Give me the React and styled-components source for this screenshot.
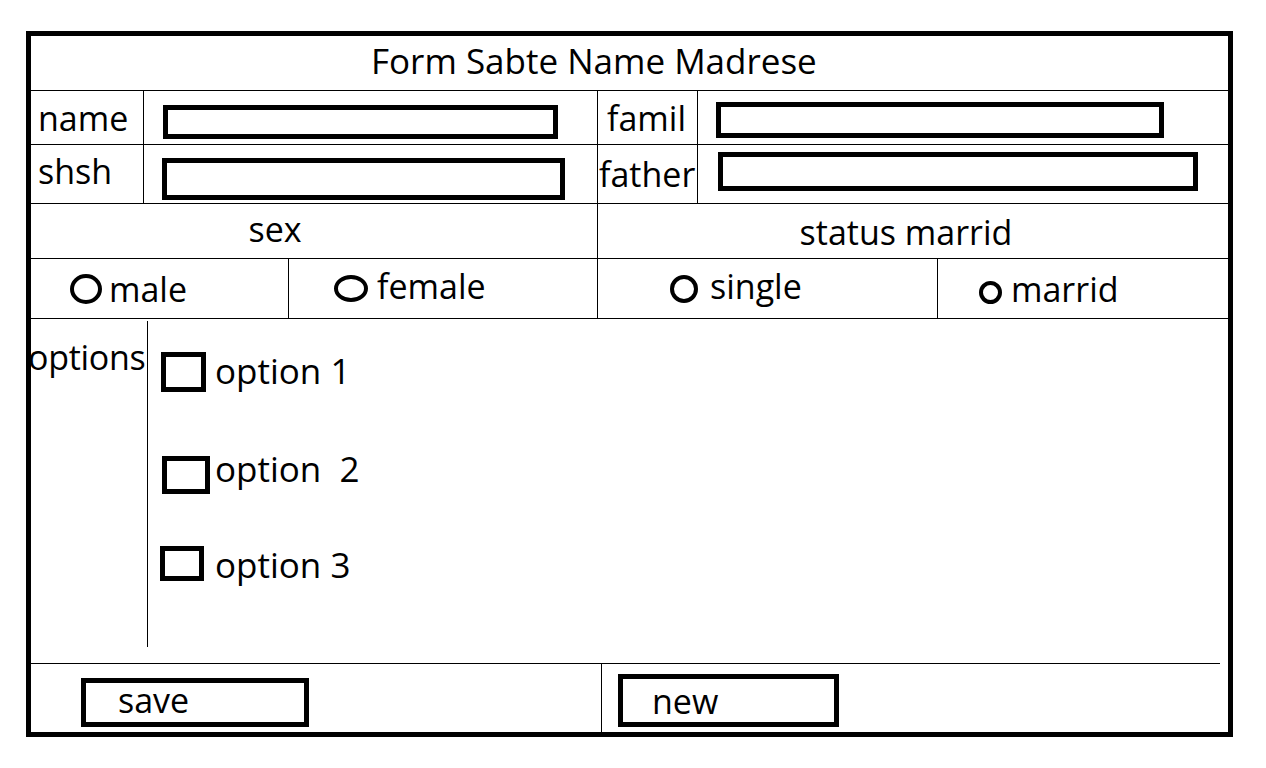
import React from "react";
import styled, { createGlobalStyle } from "styled-components";

const Global = createGlobalStyle`
  html, body { margin: 0; padding: 0; background: #fff; }
  body { font-family: "Open Sans", "Noto Sans", sans-serif; color: #000; }
  * { box-sizing: border-box; }
`;

const Frame = styled.div`
  width: 1207px;
  height: 706px;
  margin: 31px 0 0 26px;
  border: 5px solid #000;
  display: flex;
  flex-direction: column;
  font-size: 34px;
  line-height: 1;
`;

const TitleRow = styled.div`
  height: 55px;
  border-bottom: 1px solid #000;
  display: flex;
  align-items: center;
  padding: 0 0 6px 340px;
  font-size: 35px;
`;

const FieldGrid = styled.div`
  display: grid;
  grid-template-columns: 113px 454px 100px 1fr;
  grid-template-rows: 54px 59px;
`;

const LabelCell = styled.div`
  border-bottom: 1px solid #000;
  border-right: 1px solid #000;
  display: flex;
  align-items: center;
  padding-left: ${(p) => p.$pl}px;
  padding-bottom: ${(p) => p.$pb || 0}px;
  white-space: nowrap;
  overflow: visible;
`;

const InputCell = styled.div`
  border-bottom: 1px solid #000;
  border-right: ${(p) => (p.$last ? "none" : "1px solid #000")};
`;

const TextBox = styled.div`
  margin: ${(p) => p.$y}px 0 0 ${(p) => p.$x}px;
  width: ${(p) => p.$w}px;
  height: ${(p) => p.$h}px;
  border: 5px solid #000;
`;

const HeaderRow = styled.div`
  height: 55px;
  display: grid;
  grid-template-columns: 567px 1fr;
  border-bottom: 1px solid #000;
`;

const HeaderCell = styled.div`
  display: flex;
  align-items: center;
  justify-content: center;
  padding: ${(p) => p.$pt || 0}px ${(p) => p.$pr || 0}px ${(p) => p.$pb || 0}px 0;
  border-right: ${(p) => (p.$last ? "none" : "1px solid #000")};
`;

const RadioRow = styled.div`
  height: 60px;
  display: grid;
  grid-template-columns: 258px 309px 340px 1fr;
  border-bottom: 1px solid #000;
`;

const RadioCell = styled.label`
  display: flex;
  align-items: center;
  padding-left: ${(p) => p.$pl}px;
  gap: ${(p) => p.$gap}px;
  border-right: ${(p) => (p.$last ? "none" : "1px solid #000")};
`;

const Circle = styled.span`
  width: ${(p) => p.$size}px;
  height: ${(p) => p.$hsize || p.$size}px;
  border: 4px solid #000;
  border-radius: 50%;
  flex: none;
  margin-top: ${(p) => p.$mt || 0}px;
`;

const RadioText = styled.span`
  margin-top: ${(p) => p.$mt || 0}px;
`;

const OptionsSection = styled.div`
  height: 345px;
  margin-right: 8px;
  display: flex;
  border-bottom: 1px solid #000;
`;

const OptionsLabel = styled.div`
  width: 117px;
  margin: 2px 0 16px;
  border-right: 1px solid #000;
  padding-top: 19px;
  white-space: nowrap;
`;

const OptionsText = styled.span`
  display: block;
  margin-left: -3px;
  letter-spacing: -0.3px;
`;

const OptionList = styled.div`
  display: flex;
  flex-direction: column;
  padding-top: 33px;
  font-size: 35px;
`;

const OptionItem = styled.div`
  display: grid;
  grid-template-columns: 67px auto;
  align-items: center;
  margin-top: ${(p) => p.$mt || 0}px;
`;

const CheckBox = styled.span`
  width: ${(p) => p.$w}px;
  height: ${(p) => p.$h}px;
  margin-left: ${(p) => p.$ml}px;
  border: 5px solid #000;
`;

const OptionText = styled.span`
  white-space: pre;
  margin-top: ${(p) => p.$mt || 0}px;
`;

const ButtonRow = styled.div`
  flex: 1;
  display: grid;
  grid-template-columns: 571px 1fr;
`;

const ButtonCell = styled.div`
  border-right: ${(p) => (p.$last ? "none" : "1px solid #000")};
  padding: ${(p) => p.$top}px 0 0 ${(p) => p.$left}px;
`;

const Button = styled.div`
  width: ${(p) => p.$w}px;
  height: ${(p) => p.$h}px;
  border: 5px solid #000;
  display: flex;
  align-items: center;
  padding: 0 0 ${(p) => p.$pb || 0}px ${(p) => p.$pl}px;
`;

export default function App() {
  return (
    <>
      <Global />
      <Frame>
        <TitleRow>Form Sabte Name Madrese</TitleRow>
        <FieldGrid>
          <LabelCell $pl={7} $pb={0}>name</LabelCell>
          <InputCell>
            <TextBox $x={19} $y={14} $w={395} $h={34} />
          </InputCell>
          <LabelCell $pl={9}>famil</LabelCell>
          <InputCell $last>
            <TextBox $x={18} $y={11} $w={448} $h={36} />
          </InputCell>
          <LabelCell $pl={7} $pb={6}>shsh</LabelCell>
          <InputCell>
            <TextBox $x={18} $y={13} $w={403} $h={42} />
          </InputCell>
          <LabelCell $pl={1}>father</LabelCell>
          <InputCell $last>
            <TextBox $x={20} $y={7} $w={480} $h={39} />
          </InputCell>
        </FieldGrid>
        <HeaderRow>
          <HeaderCell $pr={78} $pb={4}>sex</HeaderCell>
          <HeaderCell $last $pt={2} $pr={14}>status marrid</HeaderCell>
        </HeaderRow>
        <RadioRow>
          <RadioCell $pl={39} $gap={7}>
            <Circle $size={32} $hsize={30} />
            <RadioText $mt={0}>male</RadioText>
          </RadioCell>
          <RadioCell $pl={45} $gap={9}>
            <Circle $size={34} $hsize={27} />
            <RadioText $mt={-5}>female</RadioText>
          </RadioCell>
          <RadioCell $pl={72} $gap={12}>
            <Circle $size={28} $hsize={28} />
            <RadioText $mt={-5}>single</RadioText>
          </RadioCell>
          <RadioCell $last $pl={41} $gap={9}>
            <Circle $size={23} $hsize={23} $mt={7} />
            <RadioText $mt={0}>marrid</RadioText>
          </RadioCell>
        </RadioRow>
        <OptionsSection>
          <OptionsLabel>
            <OptionsText>options</OptionsText>
          </OptionsLabel>
          <OptionList>
            <OptionItem>
              <CheckBox $w={45} $h={40} $ml={13} />
              <OptionText $mt={-4}>option 1</OptionText>
            </OptionItem>
            <OptionItem $mt={64}>
              <CheckBox $w={48} $h={38} $ml={14} />
              <OptionText $mt={-14}>option  2</OptionText>
            </OptionItem>
            <OptionItem $mt={51}>
              <CheckBox $w={44} $h={35} $ml={12} />
              <OptionText $mt={2}>option 3</OptionText>
            </OptionItem>
          </OptionList>
        </OptionsSection>
        <ButtonRow>
          <ButtonCell $top={14} $left={50}>
            <Button $w={228} $h={49} $pl={32} $pb={6}>save</Button>
          </ButtonCell>
          <ButtonCell $last $top={10} $left={16}>
            <Button $w={221} $h={53} $pl={29} $pb={0}>new</Button>
          </ButtonCell>
        </ButtonRow>
      </Frame>
    </>
  );
}
